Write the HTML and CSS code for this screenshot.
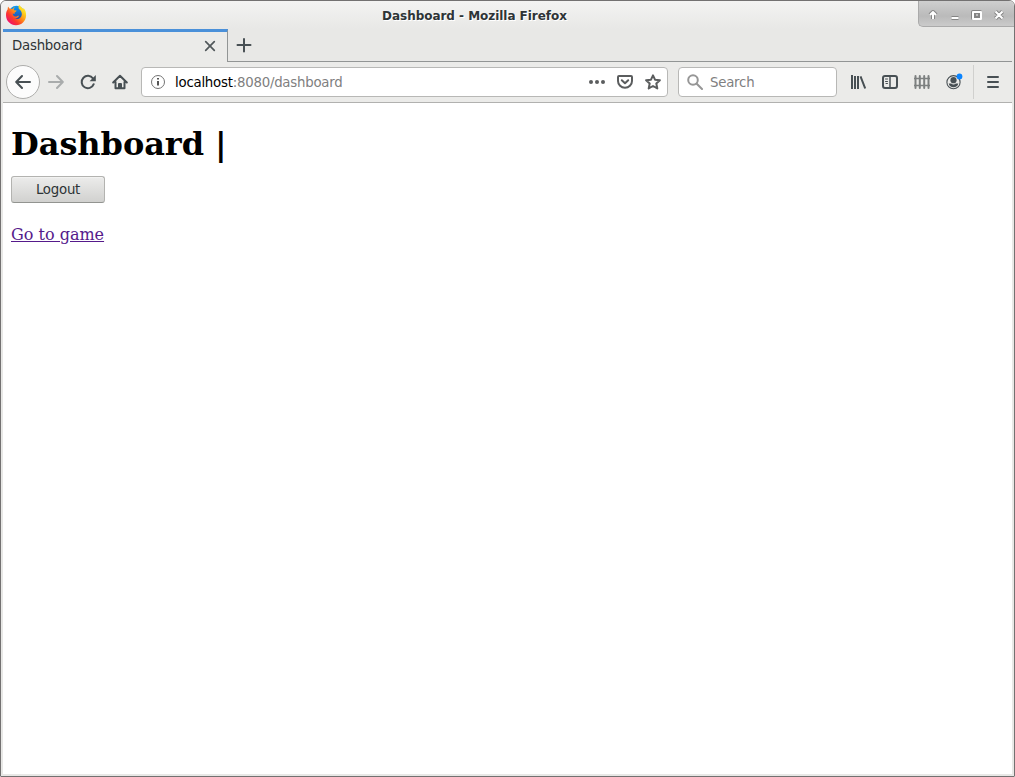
FILE: index.html
```html
<!DOCTYPE html>
<html lang="en">
<head>
<meta charset="utf-8">
<title>Dashboard</title>
<link rel="stylesheet" href="styles.css">
</head>
<body>
<div class="window">
  <header class="titlebar">
    <svg class="logo" width="22" height="22" viewBox="0 0 22 22">
      <defs>
        <linearGradient id="fox" x1="0.9" y1="0.1" x2="0.15" y2="0.85"><stop offset="0.15" stop-color="#ffdf22"/><stop offset="0.45" stop-color="#ff9416"/><stop offset="0.75" stop-color="#fc382d"/><stop offset="1" stop-color="#ef1466"/></linearGradient>
        <linearGradient id="globe" x1="0" y1="0" x2="0" y2="1"><stop offset="0" stop-color="#0a9cf5"/><stop offset="1" stop-color="#273b9b"/></linearGradient>
      </defs>
      <circle cx="11.5" cy="9.5" r="7.8" fill="url(#globe)"/>
      <path fill="url(#fox)" d="M3 2.5 5 5c1-.4 2-.3 2.7 0C8.400 4 9 3.600 10 3.300 9 4.300 8.700 5.400 9 6.200l2.500.4c.2.900-.7 1.400-1.800 1.900l-.2 1.500-1.700-.4c-.2 1.600 1 2.900 2.700 2.900 1.700 0 2-1.100 3.600-.7-1 2.300-3.200 3-5 2.500 4 2 8-.6 7.700-4.600-.2-2.500-1.700-3.700-2.800-4.700C13.300 3.700 13.300 2.300 14.200.8c.5 1.500 2.700 2.600 4.200 4.400.1-.6 0-1-.2-1.500 2 1.800 3 4.600 2.900 7.700C20.900 17.100 16.500 21.200 11 21.200S1 17 1 11.300C1 8.300 1.700 6.500 2.600 5.400z"/>
    </svg>
    <div class="caption">Dashboard - Mozilla Firefox</div>
    <div class="controls">
      <svg width="96" height="26" viewBox="0 0 96 26">
        <g fill="none" stroke-linejoin="round">
          <g stroke="#858585" stroke-width="4">
            <path d="M14 18v-6M11 14l3-3 3 3M56 11h5v6h-7v-6zM76.500 10.500l7 7m0-7-7 7"/>
            <path d="M32.500 17h7" stroke-width="4"/>
          </g>
          <g stroke="#fff" stroke-width="2">
            <path d="M14 18v-6M11 14l3-3 3 3M76.500 10.500l7 7m0-7-7 7"/>
            <path d="M32.500 17h7M54 11h8v7h-8z"/>
          </g>
          <path d="M56.500 12.500h4v4h-4z" stroke="#858585"/>
        </g>
      </svg>
    </div>
  </header>
  <div class="tabs">
    <div class="tab">
      <span>Dashboard</span>
      <svg width="12" height="12" viewBox="0 0 12 12"><path d="m1.700 1.700 8.600 8.600m0-8.600-8.600 8.600" fill="none" stroke="#51585b" stroke-width="1.700" stroke-linecap="round"/></svg>
    </div>
    <div class="tabspace"><svg width="16" height="16" viewBox="0 0 16 16"><path d="M8 2v12.500M1.500 8h13" fill="none" stroke="#485054" stroke-width="2" stroke-linecap="round"/></svg></div>
  </div>
  <nav class="toolbar">
    <div class="back"><svg class="icon" viewBox="0 0 16 16"><path d="M15 8H1.500M7 2 1.200 8 7 14"/></svg></div>
    <svg class="icon forward" viewBox="0 0 16 16"><path d="M1 8h13.500M9 2l5.800 6L9 14"/></svg>
    <svg class="icon reload" viewBox="0 0 16 16"><path d="M13.700 10.200A6.200 6.200 0 1 1 13 4.500"/><path class="solid" d="M15.800 1v6.200H9.600z"/></svg>
    <svg class="icon home" viewBox="0 0 16 16"><path d="M1.200 8.500 8 1.700l6.800 6.800M3.500 8v6.200h9V8M7 14v-4h2v4"/></svg>
    <div class="address">
      <svg class="info" width="16" height="16" viewBox="0 0 16 16"><circle cx="8" cy="8" r="6.500"/><path d="M8 7v4.500M8 4v1.500" class="mark"/></svg>
      <div class="url">localhost<span>:8080/dashboard</span></div>
      <svg class="icon dots" viewBox="0 0 16 16"><circle cx="2" cy="8" r="2"/><circle cx="8" cy="8" r="2"/><circle cx="14" cy="8" r="2"/></svg>
      <svg class="icon page" viewBox="0 0 16 16"><path d="M2 2h12q1 0 1 1v4a7 6.800 0 0 1-14 0V3q0-1 1-1zM4.800 6.300 8 9.300l3.200-3"/></svg>
      <svg class="icon page" viewBox="0 0 16 16"><path d="m8 1.300 2 4.400 4.900.5-3.600 3.300 1 4.900L8 12l-4.300 2.400 1-4.900L1.100 6.200 6 5.700z"/></svg>
    </div>
    <div class="search">
      <svg class="icon" viewBox="0 0 16 16"><circle cx="6" cy="6" r="4.800"/><path d="m9.700 9.700 5.300 5.300"/></svg>
      <span>Search</span>
    </div>
    <svg class="icon library" viewBox="0 0 16 16"><path d="M2 1v14M5 2v13M8 2v13M10.500 2.300l4.700 12.200" stroke-linecap="butt"/></svg>
    <svg class="icon tool" viewBox="0 0 16 16"><rect x="1" y="2" width="14" height="12" rx="2"/><path d="M8 2v12" stroke-width="1.500"/><path d="M3.500 5h2M3.500 7.500h2M4 9.500h1.500" stroke-width="1"/></svg>
    <svg class="icon tool fence" viewBox="0 0 16 16"><path d="M1.500 2v12M5.800 2v12M10.200 2v12M14.500 2v12"/><path d="M0 4.500h16M0 11.500h16" stroke-width="1.300"/></svg>
    <svg class="icon tool account" viewBox="0 0 16 16"><circle cx="7.500" cy="8.200" r="6.600" stroke-width="1.100"/><circle class="solid" cx="7.500" cy="6.200" r="3.100"/><path class="solid" d="M2.700 9.500h2.500q2.300 2 4.600 0h2.500c-.5 2.500-2.300 3.700-4.800 3.700S3.200 12 2.700 9.500z"/><circle cx="13.500" cy="2.500" r="2.900" class="badge"/></svg>
    <div class="menu"><svg class="icon" viewBox="0 0 16 16"><path d="M3 3h10M3 8h10M3 13h10"/></svg></div>
  </nav>
  <main class="content">
    <h1>Dashboard |</h1>
    <button class="logout">Logout</button>
    <a class="game" href="#">Go to game</a>
  </main>
</div>
</body>
</html>
```
FILE: styles.css
```css
* { box-sizing: border-box; }
html { background: #fff; }
body { margin: 0; }
svg { display: block; flex: none; }
.window {
  height: 777px;
  display: flex;
  flex-direction: column;
  border: 1px solid #737171;
  border-radius: 6px 6px 1px 1px;
  background: #e8e8e6;
  overflow: hidden;
  color: #2e3436;
  font: 13.330px "DejaVu Sans", sans-serif;
  letter-spacing: -0.24px;
}
.titlebar {
  height: 28px;
  flex: none;
  display: grid;
  grid-template-columns: 96px 1fr 96px;
  background: linear-gradient(#f3f3f2, #e8e8e6);
}
.logo { margin: 3px 0 0 4px; }
.caption {
  padding-right: 78px;
  padding-left: 12px;
  line-height: 30px;
  text-align: center;
  font-size: 12px;
  font-weight: bold;
  letter-spacing: -0.04px;
  text-shadow: 1px 1px #fff;
  white-space: nowrap;
}
.controls {
  height: 26px;
  border: solid #aaa;
  border-width: 0 0 1px 1px;
  border-radius: 0 0 0 5px;
  background: linear-gradient(#cfcfcf, #bababa 60%, #cbcbcb);
}
.tabs { height: 33px; flex: none; display: flex; padding: 0 2px; }
.tab {
  width: 225px;
  display: flex;
  align-items: center;
  justify-content: space-between;
  padding: 0 11px 2px 9px;
  border-top: 3px solid #4a90d9;
  border-right: 1px solid #929595;
  background: #ebebe9;
}
.tab span { margin-bottom: 2px; }
.tabspace { flex: 1; padding: 8px; border-bottom: 1px solid #929595; }
.toolbar {
  height: 41px;
  flex: none;
  display: flex;
  align-items: center;
  margin: 0 2px;
  padding-left: 3px;
  background: #ebebe9;
  border-bottom: 1px solid #b1b1af;
}
.icon { width: 16px; height: 16px; fill: none; stroke: #485054; stroke-width: 2; stroke-linecap: round; stroke-linejoin: round; }
.icon .solid { fill: #485054; stroke: none; }
.back {
  width: 34px;
  height: 34px;
  display: grid;
  place-items: center;
  border: 1px solid #adadab;
  border-radius: 50%;
  background: #fcfcfc;
}
.forward { margin-left: 8px; stroke: #a9acac; }
.reload, .home { margin-left: 16px; }
.address, .search {
  height: 30px;
  display: flex;
  align-items: center;
  border: 1px solid #b8b8b6;
  border-radius: 4px;
  background: #fff;
}
.address { width: 527px; margin-left: 13px; padding: 0 6px 0 8px; }
.info { fill: none; stroke: #737373; }
.info .mark { stroke: #555; stroke-width: 2; }
.url { flex: 1; margin-left: 9px; color: #000; }
.url span { color: #808080; }
.dots { fill: #5b5d5e; stroke: none; }
.page { margin-left: 12px; stroke: #5b5d5e; }
.search { width: 159px; margin-left: 10px; padding-left: 8px; color: #808080; }
.search .icon { stroke: #969696; }
.search span { margin-left: 7px; }
.library { margin-left: 13px; }
.tool { margin-left: 16px; }
.fence { stroke: #7d8080; }
.account { overflow: visible; }
.icon .badge { fill: #0a84ff; stroke: none; }
.menu { height: 34px; display: flex; align-items: center; margin-left: 11px; padding-left: 11px; border-left: 1px solid #d0d0ce; }
.content {
  flex: 1;
  display: flex;
  flex-direction: column;
  align-items: flex-start;
  margin: 0 2px 2px;
  padding: 23px 8px 0;
  background: #fff;
  letter-spacing: normal;
}
h1 { margin: 0 0 13px; color: #000; font: bold 32px/37px "DejaVu Serif", serif; letter-spacing: -0.05px; }
.logout {
  width: 94px;
  height: 27px;
  padding: 0;
  border: 1px solid #b3b3b0;
  border-bottom-color: #929490;
  border-radius: 3px;
  background: linear-gradient(#ececeb, #d1d1cf);
  box-shadow: inset 0 1px #f2f2f1;
  color: #2e3436;
  font: inherit;
  letter-spacing: -0.24px;
}
.game { margin-top: 22px; color: #551a8b; font: 16px/19px "DejaVu Serif", serif; }
```
